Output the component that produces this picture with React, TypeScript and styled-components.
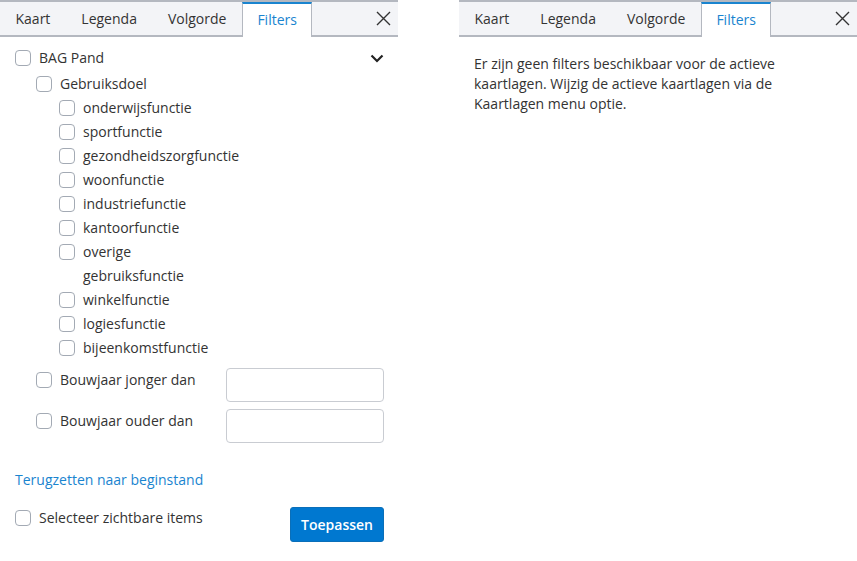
import styled, { createGlobalStyle } from "styled-components";

const GlobalStyle = createGlobalStyle`
    body {
        margin: 0;
        background: #fff;
        font-family: "Open Sans", "Noto Sans", sans-serif;
        font-size: 14px;
        color: #333;
    }
`;

const Page = styled.div`
    display: flex;
    gap: 61px;
    width: 857px;
`;

const Panel = styled.div`
    width: 398px;
    display: flex;
    flex-direction: column;
`;

const TabBar = styled.div`
    display: flex;
    height: 33px;
    background: #f3f4f7;
    border-top: 2px solid #b4b8c0;
    border-bottom: 2px solid #b4b8c0;
`;

const Tab = styled.div<{ $active?: boolean }>`
    display: flex;
    align-items: center;
    padding: 0 15.5px;
    color: ${({ $active }) => ($active ? "#1a84cf" : "#333")};
    ${({ $active }) =>
        $active &&
        `
        background: #fff;
        padding: 0 14.5px;
        border-left: 1px solid #b4b8c0;
        border-right: 1px solid #b4b8c0;
        border-top: 2px solid #1a84cf;
        margin-bottom: -2px;
        padding-bottom: 2px;
    `}
`;

const CloseButton = styled.button`
    margin-left: auto;
    width: 30px;
    display: flex;
    align-items: center;
    justify-content: center;
    border: none;
    background: none;
    padding: 0;
    color: #333;
`;

const Content = styled.div`
    padding: 9px 14px 14px 15px;
`;

const Row = styled.div<{ $indent?: number }>`
    display: flex;
    align-items: flex-start;
    gap: 8px;
    line-height: 24px;
    padding-left: ${({ $indent = 0 }) => $indent}px;
`;

const Box = styled.span`
    flex: none;
    width: 14px;
    height: 14px;
    margin-top: 4px;
    border: 1px solid #a3aab4;
    border-radius: 4px;
    background: #fff;
`;

const Label = styled.span<{ $max?: number }>`
    ${({ $max }) => ($max ? `max-width: ${$max}px;` : "")}
`;

const Chevron = styled.span`
    margin-left: auto;
    display: flex;
    align-items: center;
    height: 24px;
`;

const Group = styled.div<{ $gap?: number }>`
    display: flex;
    flex-direction: column;
    margin-top: ${({ $gap = 0 }) => $gap}px;
`;

const FieldRow = styled(Row)`
    justify-content: space-between;
`;

const YearInput = styled.input`
    width: 158px;
    height: 34px;
    box-sizing: border-box;
    border: 1px solid #c9ccd2;
    border-radius: 4px;
    font: inherit;
    padding: 0 8px;
`;

const FieldList = styled.div`
    display: flex;
    flex-direction: column;
    gap: 7px;
    margin-top: 8px;
`;

const ResetLink = styled.a`
    display: block;
    margin-top: 27px;
    line-height: 20px;
    color: #1a84cf;
    text-decoration: none;
    cursor: pointer;
`;

const Footer = styled.div`
    display: flex;
    justify-content: space-between;
    align-items: flex-start;
    margin-top: 16px;
`;

const ApplyButton = styled.button`
    height: 35px;
    padding: 0 10px;
    border: 1px solid #0a6fb9;
    border-radius: 3px;
    background: #0078d0;
    color: #fff;
    font: inherit;
    font-size: 14px;
    font-weight: 600;
    margin-top: 1px;
`;

const Message = styled.p`
    margin: 17px 15px 0;
    line-height: 20px;
`;

const tabs = ["Kaart", "Legenda", "Volgorde", "Filters"];

const uses = [
    "onderwijsfunctie",
    "sportfunctie",
    "gezondheidszorgfunctie",
    "woonfunctie",
    "industriefunctie",
    "kantoorfunctie",
    "overige gebruiksfunctie",
    "winkelfunctie",
    "logiesfunctie",
    "bijeenkomstfunctie",
];

const Tabs = () => (
    <TabBar>
        {tabs.map((t) => (
            <Tab key={t} $active={t === "Filters"}>
                {t}
            </Tab>
        ))}
        <CloseButton aria-label="Sluiten">
            <svg width="15" height="15" viewBox="0 0 15 15">
                <path d="M1 1 L14 14 M14 1 L1 14" stroke="#333" strokeWidth="1.4" fill="none" />
            </svg>
        </CloseButton>
    </TabBar>
);

const Check = ({ label, indent, max }: { label: string; indent?: number; max?: number }) => (
    <Row $indent={indent}>
        <Box />
        <Label $max={max}>{label}</Label>
    </Row>
);

export default function App() {
    return (
        <>
            <GlobalStyle />
            <Page>
                <Panel>
                    <Tabs />
                    <Content>
                        <Row>
                            <Box />
                            <Label>BAG Pand</Label>
                            <Chevron>
                                <svg width="14" height="9" viewBox="0 0 14 9">
                                    <path d="M1.5 1.5 L7 7 L12.5 1.5" stroke="#222" strokeWidth="2.2" fill="none" />
                                </svg>
                            </Chevron>
                        </Row>
                        <Group $gap={2}>
                            <Check label="Gebruiksdoel" indent={21} />
                            {uses.map((u) => (
                                <Check key={u} label={u} indent={44} max={140} />
                            ))}
                        </Group>
                        <FieldList>
                            <FieldRow $indent={21}>
                                <Row>
                                    <Box />
                                    <Label>Bouwjaar jonger dan</Label>
                                </Row>
                                <YearInput />
                            </FieldRow>
                            <FieldRow $indent={21}>
                                <Row>
                                    <Box />
                                    <Label>Bouwjaar ouder dan</Label>
                                </Row>
                                <YearInput />
                            </FieldRow>
                        </FieldList>
                        <ResetLink>Terugzetten naar beginstand</ResetLink>
                        <Footer>
                            <Check label="Selecteer zichtbare items" />
                            <ApplyButton>Toepassen</ApplyButton>
                        </Footer>
                    </Content>
                </Panel>
                <Panel>
                    <Tabs />
                    <Message>
                        Er zijn geen filters beschikbaar voor de actieve kaartlagen. Wijzig de actieve
                        kaartlagen via de Kaartlagen menu optie.
                    </Message>
                </Panel>
            </Page>
        </>
    );
}
